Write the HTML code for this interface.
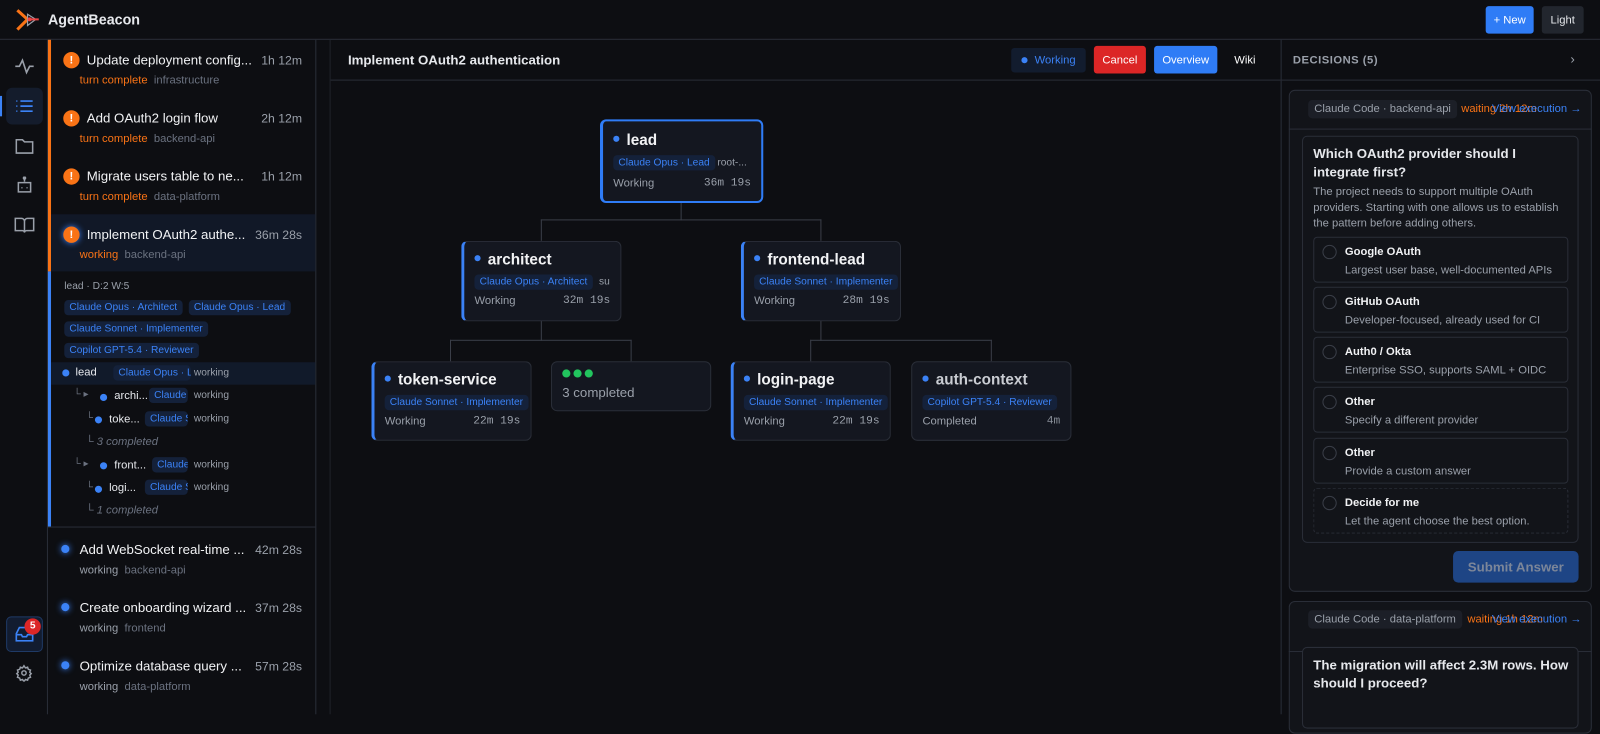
<!DOCTYPE html>
<html><head><meta charset="utf-8"><style>
*{box-sizing:border-box;margin:0;padding:0}
html,body{width:1600px;height:700px;overflow:hidden;background:#0d0e12}
body{font-family:"Liberation Sans",sans-serif;color:#e6e8ec;font-size:12px}
#w{position:absolute;left:0;top:0;width:1568px;height:686px;transform:scale(1.0204);transform-origin:0 0}
.a{position:absolute}
.btn{display:flex;align-items:center;justify-content:center}
.chip{position:absolute;background:#14213a;color:#3b82f6;font-size:11px;border-radius:4px;padding:2px 5px;white-space:nowrap;overflow:hidden}
.node{position:absolute;background:#141720;border:1px solid #2a2e38;border-radius:6px}
.node .t{position:absolute;left:10px;top:9px;font-size:15px;font-weight:bold;color:#f1f2f4}
.node .t:before{content:"";display:inline-block;width:6px;height:6px;border-radius:3px;background:#3b82f6;margin-right:7px;vertical-align:3px}
.node .s{position:absolute;left:10px;top:52px;font-size:11px;color:#9aa0aa}
.node .tm{position:absolute;right:10px;top:52px;font-size:11px;color:#9aa0aa;font-family:"Liberation Mono",monospace}
.bl{border-left:3px solid #3b82f6}
.ln{position:absolute;background:#3a3e48}
.item{position:absolute;left:50px;width:259px;height:57px}
.item .ti{position:absolute;left:35px;top:11px;font-size:13px;color:#f1f2f4;white-space:nowrap}
.item .tt{position:absolute;right:13px;top:12px;font-size:12px;color:#9aa0aa}
.item .st{position:absolute;left:28px;top:33px;font-size:11px}
.ex{position:absolute;left:12px;top:11px;width:16px;height:16px;border-radius:8px;background:#f97316;color:#fff;font-size:11px;font-weight:bold;text-align:center;line-height:16px}
.bd{position:absolute;left:13px;top:14px;width:8px;height:8px;border-radius:4px;background:#3b82f6;box-shadow:0 0 6px #3b82f6}
.o{color:#f97316}.g{color:#6b7280}.w{color:#9aa0aa}
.opt{position:absolute;left:1287px;width:250px;height:45px;border:1px solid #2a2e38;border-radius:4px}
.opt .r{position:absolute;left:8px;top:7px;width:14px;height:14px;border:1px solid #3a3e48;border-radius:7px}
.opt b{position:absolute;left:30px;top:8px;font-size:11px;color:#f1f2f4}
.opt span{position:absolute;left:30px;top:26px;font-size:11px;color:#9aa0aa}
.tr{position:absolute;font-size:11px;white-space:nowrap}
</style></head><body><div id="w">
<!-- header -->
<div class="a" style="left:0;top:0;width:1568px;height:39px;border-bottom:1px solid #2a2e38"></div>
<svg class="a" style="left:15px;top:9px" width="24" height="22" viewBox="0 0 24 22"><path d="M2 1 L12 10 L2 20" stroke="#f97316" stroke-width="3" fill="none"/><path d="M12 5 L20 10 L12 16 Z" stroke="#9aa0aa" stroke-width="1.2" fill="none"/><circle cx="14" cy="10" r="2" fill="#ef4444"/><path d="M14 10 L23 10" stroke="#ef4444" stroke-width="2"/></svg>
<div class="a" style="left:47px;top:11px;font-size:14px;font-weight:bold">AgentBeacon</div>
<div class="a btn" style="left:1456px;top:6px;width:47px;height:27px;background:#2f7cf6;border-radius:3px;font-size:11px;color:#fff">+ New</div>
<div class="a btn" style="left:1511px;top:6px;width:41px;height:27px;background:#22262e;border-radius:3px;font-size:11px;color:#e6e8ec">Light</div>
<!-- rail -->
<div class="a" style="left:46px;top:39px;width:1px;height:661px;background:#2a2e38"></div>
<svg class="a" style="left:14px;top:56px" width="20" height="18" viewBox="0 0 20 18" fill="none" stroke="#9aa0aa" stroke-width="1.6"><path d="M1 9h4l3-6 4 12 3-6h4"/></svg>
<div class="a" style="left:6px;top:86px;width:36px;height:36px;background:#141c2c;border-radius:6px"></div>
<div class="a" style="left:0;top:94px;width:2px;height:20px;background:#3b82f6"></div>
<svg class="a" style="left:15px;top:97px" width="18" height="14" viewBox="0 0 18 14" stroke="#3b82f6" stroke-width="1.6"><path d="M1 2h1M5 2h12M1 7h1M5 7h12M1 12h1M5 12h12"/></svg>
<svg class="a" style="left:15px;top:135px" width="18" height="16" viewBox="0 0 18 16" fill="none" stroke="#9aa0aa" stroke-width="1.5"><path d="M1 2h6l2 2h8v11H1z"/></svg>
<svg class="a" style="left:15px;top:173px" width="18" height="18" viewBox="0 0 18 18" fill="none" stroke="#9aa0aa" stroke-width="1.5"><path d="M9 1v4M3 6h12v9H3z"/><circle cx="9" cy="1.5" r="1"/><path d="M6 11h1M11 11h1"/></svg>
<svg class="a" style="left:14px;top:213px" width="20" height="16" viewBox="0 0 20 16" fill="none" stroke="#9aa0aa" stroke-width="1.5"><path d="M1 1h6a3 3 0 0 1 3 3v11a2 2 0 0 0-2-2H1zM19 1h-6a3 3 0 0 0-3 3v11a2 2 0 0 1 2-2h7z"/></svg>
<div class="a" style="left:6px;top:604px;width:36px;height:35px;background:#121c30;border:1px solid #1f3a66;border-radius:5px"></div>
<svg class="a" style="left:15px;top:614px" width="18" height="15" viewBox="0 0 18 15" fill="none" stroke="#3b82f6" stroke-width="1.6"><path d="M1 7l3-6h10l3 6v7H1zM1 8h5l1 2h4l1-2h5"/></svg>
<div class="a" style="left:24px;top:606px;width:16px;height:16px;border-radius:8px;background:#dc2626;color:#fff;font-size:10px;font-weight:bold;text-align:center;line-height:16px">5</div>
<svg class="a" style="left:15px;top:651px" width="17" height="17" viewBox="0 0 24 24" fill="none" stroke="#9aa0aa" stroke-width="2"><circle cx="12" cy="12" r="3"/><path d="M12 2l2 3 3-1 1 3 3 1-1 3 2 2-2 2 1 3-3 1-1 3-3-1-2 3-2-3-3 1-1-3-3-1 1-3-2-2 2-2-1-3 3-1 1-3 3 1z"/></svg>
<!-- task list -->
<div class="a" style="left:309px;top:39px;width:1px;height:661px;background:#2a2e38"></div>
<div class="a" style="left:47px;top:39px;width:3px;height:227px;background:#f97316"></div>
<div class="a" style="left:47px;top:266px;width:3px;height:250px;background:#3b82f6"></div>
<div class="a" style="left:50px;top:210px;width:259px;height:56px;background:#111827"></div>
<div class="item" style="top:40px"><div class="ex">!</div><div class="ti">Update deployment config...</div><div class="tt">1h 12m</div><div class="st"><span class="o">turn complete</span> &nbsp;<span class="g">infrastructure</span></div></div>
<div class="item" style="top:97px"><div class="ex">!</div><div class="ti">Add OAuth2 login flow</div><div class="tt">2h 12m</div><div class="st"><span class="o">turn complete</span> &nbsp;<span class="g">backend-api</span></div></div>
<div class="item" style="top:154px"><div class="ex">!</div><div class="ti">Migrate users table to ne...</div><div class="tt">1h 12m</div><div class="st"><span class="o">turn complete</span> &nbsp;<span class="g">data-platform</span></div></div>
<div class="item" style="top:211px"><div class="ex" style="box-shadow:0 0 6px #3b82f6">!</div><div class="ti">Implement OAuth2 authe...</div><div class="tt">36m 28s</div><div class="st"><span class="o">working</span> &nbsp;<span class="g">backend-api</span></div></div>
<div class="tr w" style="left:63px;top:275px;font-size:10px">lead · D:2 W:5</div>
<div class="chip" style="left:63px;top:294px;font-size:10px">Claude Opus · Architect</div>
<div class="chip" style="left:185px;top:294px;font-size:10px">Claude Opus · Lead</div>
<div class="chip" style="left:63px;top:315px;font-size:10px">Claude Sonnet · Implementer</div>
<div class="chip" style="left:63px;top:336px;font-size:10px">Copilot GPT-5.4 · Reviewer</div>
<div class="a" style="left:50px;top:355px;width:259px;height:22px;background:#111a2a"></div>
<div class="a" style="left:61px;top:362px;width:7px;height:7px;border-radius:4px;background:#3b82f6"></div>
<div class="tr" style="left:74px;top:359px">lead</div>
<div class="chip" style="left:111px;top:358px;width:76px;font-size:10px">Claude Opus · Lead</div>
<div class="tr w" style="left:190px;top:360px;font-size:10px">working</div>
<div class="tr g" style="left:72px;top:381px;font-size:10px">└ ▸</div><div class="a" style="left:98px;top:386px;width:7px;height:7px;border-radius:4px;background:#3b82f6"></div><div class="tr" style="left:112px;top:382px;font-size:11px">archi...</div><div class="chip" style="left:146px;top:380px;width:38px;font-size:10px">Claude</div><div class="tr w" style="left:190px;top:382px;font-size:10px">working</div>
<div class="tr g" style="left:84px;top:404px;font-size:10px">└</div><div class="a" style="left:93px;top:408px;width:7px;height:7px;border-radius:4px;background:#3b82f6"></div><div class="tr" style="left:107px;top:405px;font-size:11px">toke...</div><div class="chip" style="left:142px;top:403px;width:42px;font-size:10px">Claude S</div><div class="tr w" style="left:190px;top:405px;font-size:10px">working</div>
<div class="tr g" style="left:84px;top:427px;font-size:11px;font-style:italic">└ 3 completed</div>
<div class="tr g" style="left:72px;top:449px;font-size:10px">└ ▸</div><div class="a" style="left:98px;top:453px;width:7px;height:7px;border-radius:4px;background:#3b82f6"></div><div class="tr" style="left:112px;top:450px;font-size:11px">front...</div><div class="chip" style="left:149px;top:448px;width:35px;font-size:10px">Claude</div><div class="tr w" style="left:190px;top:450px;font-size:10px">working</div>
<div class="tr g" style="left:84px;top:472px;font-size:10px">└</div><div class="a" style="left:93px;top:476px;width:7px;height:7px;border-radius:4px;background:#3b82f6"></div><div class="tr" style="left:107px;top:472px;font-size:11px">logi...</div><div class="chip" style="left:142px;top:470px;width:42px;font-size:10px">Claude S</div><div class="tr w" style="left:190px;top:472px;font-size:10px">working</div>
<div class="tr g" style="left:84px;top:494px;font-size:11px;font-style:italic">└ 1 completed</div>
<div class="a" style="left:47px;top:516px;width:262px;height:1px;background:#2a2e38"></div>
<div class="item" style="top:520px;left:47px;width:262px"><div class="bd"></div><div class="ti" style="left:31px">Add WebSocket real-time ...</div><div class="tt">42m 28s</div><div class="st" style="left:31px"><span class="w">working</span> &nbsp;<span class="g">backend-api</span></div></div>
<div class="item" style="top:577px;left:47px;width:262px"><div class="bd"></div><div class="ti" style="left:31px">Create onboarding wizard ...</div><div class="tt">37m 28s</div><div class="st" style="left:31px"><span class="w">working</span> &nbsp;<span class="g">frontend</span></div></div>
<div class="item" style="top:634px;left:47px;width:262px"><div class="bd"></div><div class="ti" style="left:31px">Optimize database query ...</div><div class="tt">57m 28s</div><div class="st" style="left:31px"><span class="w">working</span> &nbsp;<span class="g">data-platform</span></div></div>
<!-- main -->
<div class="a" style="left:323px;top:39px;width:1px;height:661px;background:#1f2229"></div>
<div class="a" style="left:324px;top:78px;width:931px;height:1px;background:#2a2e38"></div>
<div class="a" style="left:341px;top:51px;font-size:13px;font-weight:bold">Implement OAuth2 authentication</div>
<div class="a btn" style="left:991px;top:47px;width:73px;height:24px;background:#121c2e;border-radius:3px;color:#3b82f6;font-size:11px"><span style="display:inline-block;width:6px;height:6px;border-radius:3px;background:#3b82f6;margin-right:7px"></span>Working</div>
<div class="a btn" style="left:1072px;top:45px;width:51px;height:27px;background:#dc2626;border-radius:3px;color:#fff;font-size:11px">Cancel</div>
<div class="a btn" style="left:1131px;top:45px;width:62px;height:27px;background:#2f7cf6;border-radius:3px;color:#fff;font-size:11px">Overview</div>
<div class="a btn" style="left:1201px;top:45px;width:38px;height:27px;color:#fff;font-size:11px">Wiki</div>
<!-- connectors -->
<div class="ln" style="left:667px;top:198px;width:1px;height:18px"></div>
<div class="ln" style="left:530px;top:215px;width:275px;height:1px"></div>
<div class="ln" style="left:530px;top:215px;width:1px;height:21px"></div>
<div class="ln" style="left:804px;top:215px;width:1px;height:21px"></div>
<div class="ln" style="left:530px;top:314px;width:1px;height:20px"></div>
<div class="ln" style="left:441px;top:333px;width:178px;height:1px"></div>
<div class="ln" style="left:441px;top:333px;width:1px;height:21px"></div>
<div class="ln" style="left:618px;top:333px;width:1px;height:21px"></div>
<div class="ln" style="left:804px;top:314px;width:1px;height:20px"></div>
<div class="ln" style="left:794px;top:333px;width:178px;height:1px"></div>
<div class="ln" style="left:794px;top:333px;width:1px;height:21px"></div>
<div class="ln" style="left:971px;top:333px;width:1px;height:21px"></div>
<!-- nodes -->
<div class="node" style="left:588px;top:117px;width:160px;height:82px;border:2px solid #2f7cf6;border-left-width:3px;overflow:hidden"><div class="t" style="top:10px">lead</div><div class="chip" style="left:10px;top:33px;font-size:10px">Claude Opus · Lead</div><div class="tr w" style="left:112px;top:35px;font-size:10px">root-...</div><div class="s" style="top:55px">Working</div><div class="tm" style="top:55px">36m 19s</div></div>
<div class="node bl" style="left:452px;top:236px;width:157px;height:79px;overflow:hidden"><div class="t">architect</div><div class="chip" style="left:10px;top:32px;font-size:10px">Claude Opus · Architect</div><div class="tr w" style="left:132px;top:34px;font-size:10px">su</div><div class="s">Working</div><div class="tm">32m 19s</div></div>
<div class="node bl" style="left:726px;top:236px;width:157px;height:79px;overflow:hidden"><div class="t">frontend-lead</div><div class="chip" style="left:10px;top:32px;font-size:10px">Claude Sonnet · Implementer</div><div class="s">Working</div><div class="tm">28m 19s</div></div>
<div class="node bl" style="left:364px;top:354px;width:157px;height:78px;overflow:hidden"><div class="t">token-service</div><div class="chip" style="left:10px;top:32px;font-size:10px">Claude Sonnet · Implementer</div><div class="s">Working</div><div class="tm">22m 19s</div></div>
<div class="node" style="left:540px;top:354px;width:157px;height:49px"><div class="a" style="left:10px;top:7px;width:8px;height:8px;border-radius:4px;background:#22c55e"></div><div class="a" style="left:21px;top:7px;width:8px;height:8px;border-radius:4px;background:#22c55e"></div><div class="a" style="left:32px;top:7px;width:8px;height:8px;border-radius:4px;background:#22c55e"></div><div class="a" style="left:10px;top:22px;font-size:13px;color:#9aa0aa">3 completed</div></div>
<div class="node bl" style="left:716px;top:354px;width:157px;height:78px;overflow:hidden"><div class="t">login-page</div><div class="chip" style="left:10px;top:32px;font-size:10px">Claude Sonnet · Implementer</div><div class="s">Working</div><div class="tm">22m 19s</div></div>
<div class="node" style="left:893px;top:354px;width:157px;height:78px;overflow:hidden"><div class="t" style="color:#c9ccd2">auth-context</div><div class="chip" style="left:10px;top:32px;font-size:10px">Copilot GPT-5.4 · Reviewer</div><div class="s">Completed</div><div class="tm" style="color:#8a9099">4m</div></div>
<!-- right panel -->
<div class="a" style="left:1255px;top:39px;width:1px;height:661px;background:#2a2e38"></div>
<div class="a" style="left:1256px;top:78px;width:344px;height:1px;background:#2a2e38"></div>
<div class="a" style="left:1267px;top:53px;font-size:11px;font-weight:bold;color:#9aa0aa;letter-spacing:.5px">DECISIONS (5)</div>
<div class="a" style="left:1539px;top:50px;font-size:13px;color:#9aa0aa">›</div>
<div class="a" style="left:1263px;top:88px;width:297px;height:492px;background:#121419;border:1px solid #2a2e38;border-radius:6px"></div>
<div class="a" style="left:1263px;top:126px;width:297px;height:1px;background:#2a2e38"></div>
<div class="chip" style="left:1282px;top:98px;background:#1c1f27;color:#9aa0aa;padding:3px 6px">Claude Code · backend-api</div>
<div class="tr o" style="left:1432px;top:101px">waiting 2h 12m</div>
<div class="tr" style="left:1462px;top:101px;color:#3b82f6">View execution →</div>
<div class="a" style="left:1276px;top:133px;width:271px;height:399px;border:1px solid #2a2e38;border-radius:5px"></div>
<div class="a" style="left:1287px;top:142px;width:250px;font-size:13px;font-weight:bold;line-height:18px">Which OAuth2 provider should I integrate first?</div>
<div class="a" style="left:1287px;top:181px;width:255px;font-size:11px;color:#9aa0aa;line-height:15.5px">The project needs to support multiple OAuth providers. Starting with one allows us to establish the pattern before adding others.</div>
<div class="opt" style="top:232px"><div class="r"></div><b>Google OAuth</b><span>Largest user base, well-documented APIs</span></div>
<div class="opt" style="top:281px"><div class="r"></div><b>GitHub OAuth</b><span>Developer-focused, already used for CI</span></div>
<div class="opt" style="top:330px"><div class="r"></div><b>Auth0 / Okta</b><span>Enterprise SSO, supports SAML + OIDC</span></div>
<div class="opt" style="top:379px"><div class="r"></div><b>Other</b><span>Specify a different provider</span></div>
<div class="opt" style="top:429px"><div class="r"></div><b>Other</b><span>Provide a custom answer</span></div>
<div class="opt" style="top:478px;border-style:dashed"><div class="r"></div><b>Decide for me</b><span>Let the agent choose the best option.</span></div>
<div class="a btn" style="left:1424px;top:540px;width:123px;height:31px;background:#1e4585;border-radius:5px;color:#7c8699;font-size:13px;font-weight:bold">Submit Answer</div>
<div class="a" style="left:1263px;top:589px;width:297px;height:130px;background:#121419;border:1px solid #2a2e38;border-radius:6px"></div>
<div class="a" style="left:1263px;top:638px;width:297px;height:1px;background:#2a2e38"></div>
<div class="chip" style="left:1282px;top:598px;background:#1c1f27;color:#9aa0aa;padding:3px 6px">Claude Code · data-platform</div>
<div class="tr o" style="left:1438px;top:601px">waiting 1h 12m</div>
<div class="tr" style="left:1462px;top:601px;color:#3b82f6">View execution →</div>
<div class="a" style="left:1276px;top:634px;width:271px;height:80px;border:1px solid #2a2e38;border-radius:5px;background:#121419"></div>
<div class="a" style="left:1287px;top:643px;width:255px;font-size:13px;font-weight:bold;line-height:18px">The migration will affect 2.3M rows. How should I proceed?</div>
</div></body></html>
